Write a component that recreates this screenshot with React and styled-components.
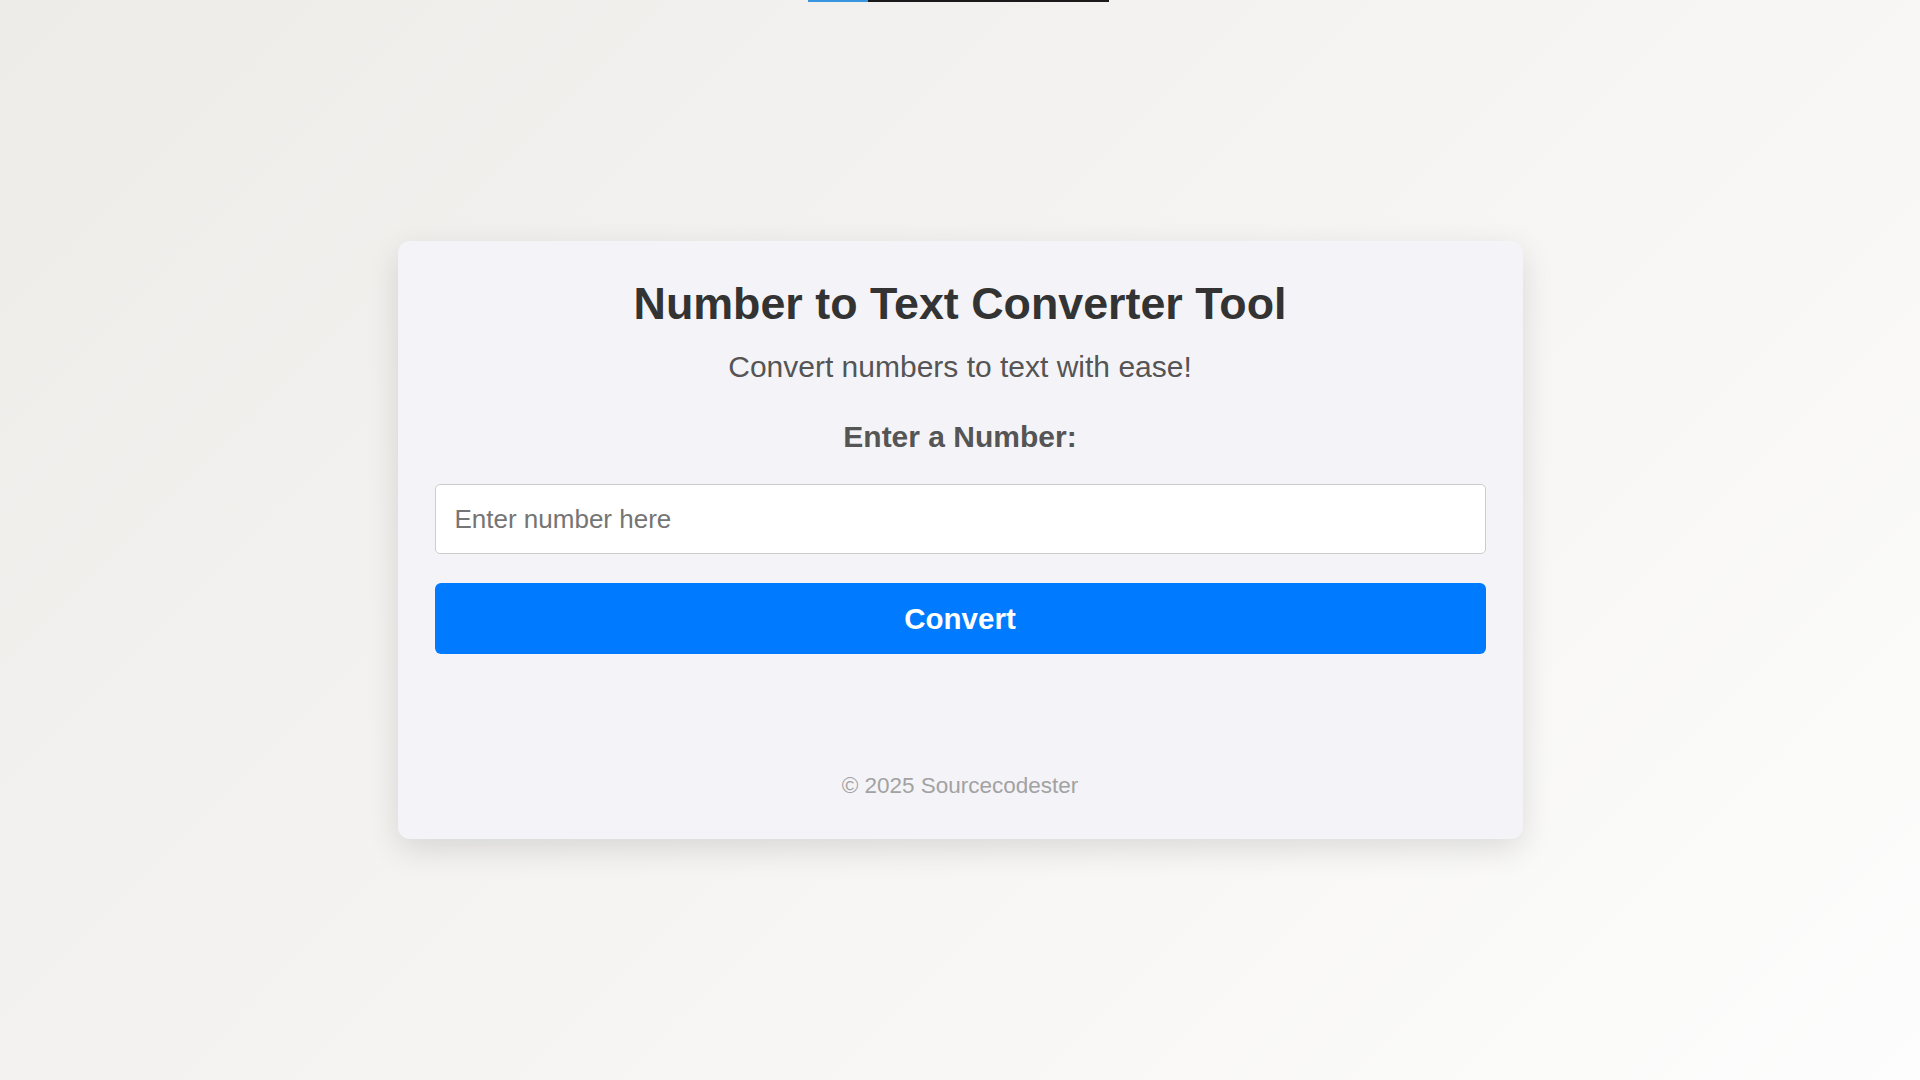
import React, { useState } from 'react'
import styled, { createGlobalStyle } from 'styled-components'

const GlobalStyle = createGlobalStyle`
  html, body {
    margin: 0;
    padding: 0;
  }
  body {
    font-family: "Liberation Sans", Arial, sans-serif;
    background: linear-gradient(135deg, #eeece9 0%, #f5f4f2 50%, #fdfdfd 100%);
    min-height: 100vh;
  }
  * {
    box-sizing: border-box;
  }
`

function App() {
  const [value, setValue] = useState('')

  return (
    <>
      <GlobalStyle />
      <TopProgress>
        <ProgressFill />
      </TopProgress>
      <Page>
        <Card>
          <Title>Number to Text Converter Tool</Title>
          <Subtitle>Convert numbers to text with ease!</Subtitle>
          <Label htmlFor="number">Enter a Number:</Label>
          <NumberInput
            id="number"
            type="text"
            placeholder="Enter number here"
            value={value}
            onChange={(e) => setValue(e.target.value)}
          />
          <ConvertButton>Convert</ConvertButton>
          <Result />
          <Footer>© 2025 Sourcecodester</Footer>
        </Card>
      </Page>
    </>
  )
}

const TopProgress = styled.div`
  position: absolute;
  top: 0;
  left: 808px;
  width: 301px;
  height: 2px;
  background: #1a1a1a;
`
const ProgressFill = styled.div`
  width: 60px;
  height: 100%;
  background: #3a95e0;
`
const Page = styled.div`
  min-height: 100vh;
  display: flex;
  align-items: center;
  justify-content: center;
`
const Card = styled.div`
  width: 1125px;
  background: #f4f4f8;
  border-radius: 12px;
  box-shadow: 0 10px 32px rgba(0, 0, 0, 0.12);
  padding: 37px 37px 40px;
  display: flex;
  flex-direction: column;
  align-items: stretch;
  text-align: center;
`
const Title = styled.h1`
  margin: 0;
  font-size: 44.8px;
  font-weight: 700;
  color: #333;
`
const Subtitle = styled.p`
  margin: 21px 0 0;
  font-size: 30px;
  color: #555;
`
const Label = styled.label`
  margin-top: 36px;
  font-size: 30px;
  font-weight: 700;
  color: #555;
`
const NumberInput = styled.input`
  margin-top: 30px;
  height: 70px;
  padding: 0 19px;
  font-family: "Liberation Sans", Arial, sans-serif;
  font-size: 26px;
  color: #333;
  background: #fff;
  border: 1px solid #ccc;
  border-radius: 5px;
  outline: none;
  &::placeholder {
    color: #757575;
  }
`
const ConvertButton = styled.button`
  margin-top: 29px;
  height: 71px;
  font-family: "Liberation Sans", Arial, sans-serif;
  font-size: 29.5px;
  font-weight: 700;
  color: #fff;
  background: #007bff;
  border: none;
  border-radius: 6px;
  cursor: pointer;
`
const Result = styled.div`
  min-height: 119px;
`
const Footer = styled.footer`
  font-size: 22.5px;
  color: #a2a2a2;
`

export default App
